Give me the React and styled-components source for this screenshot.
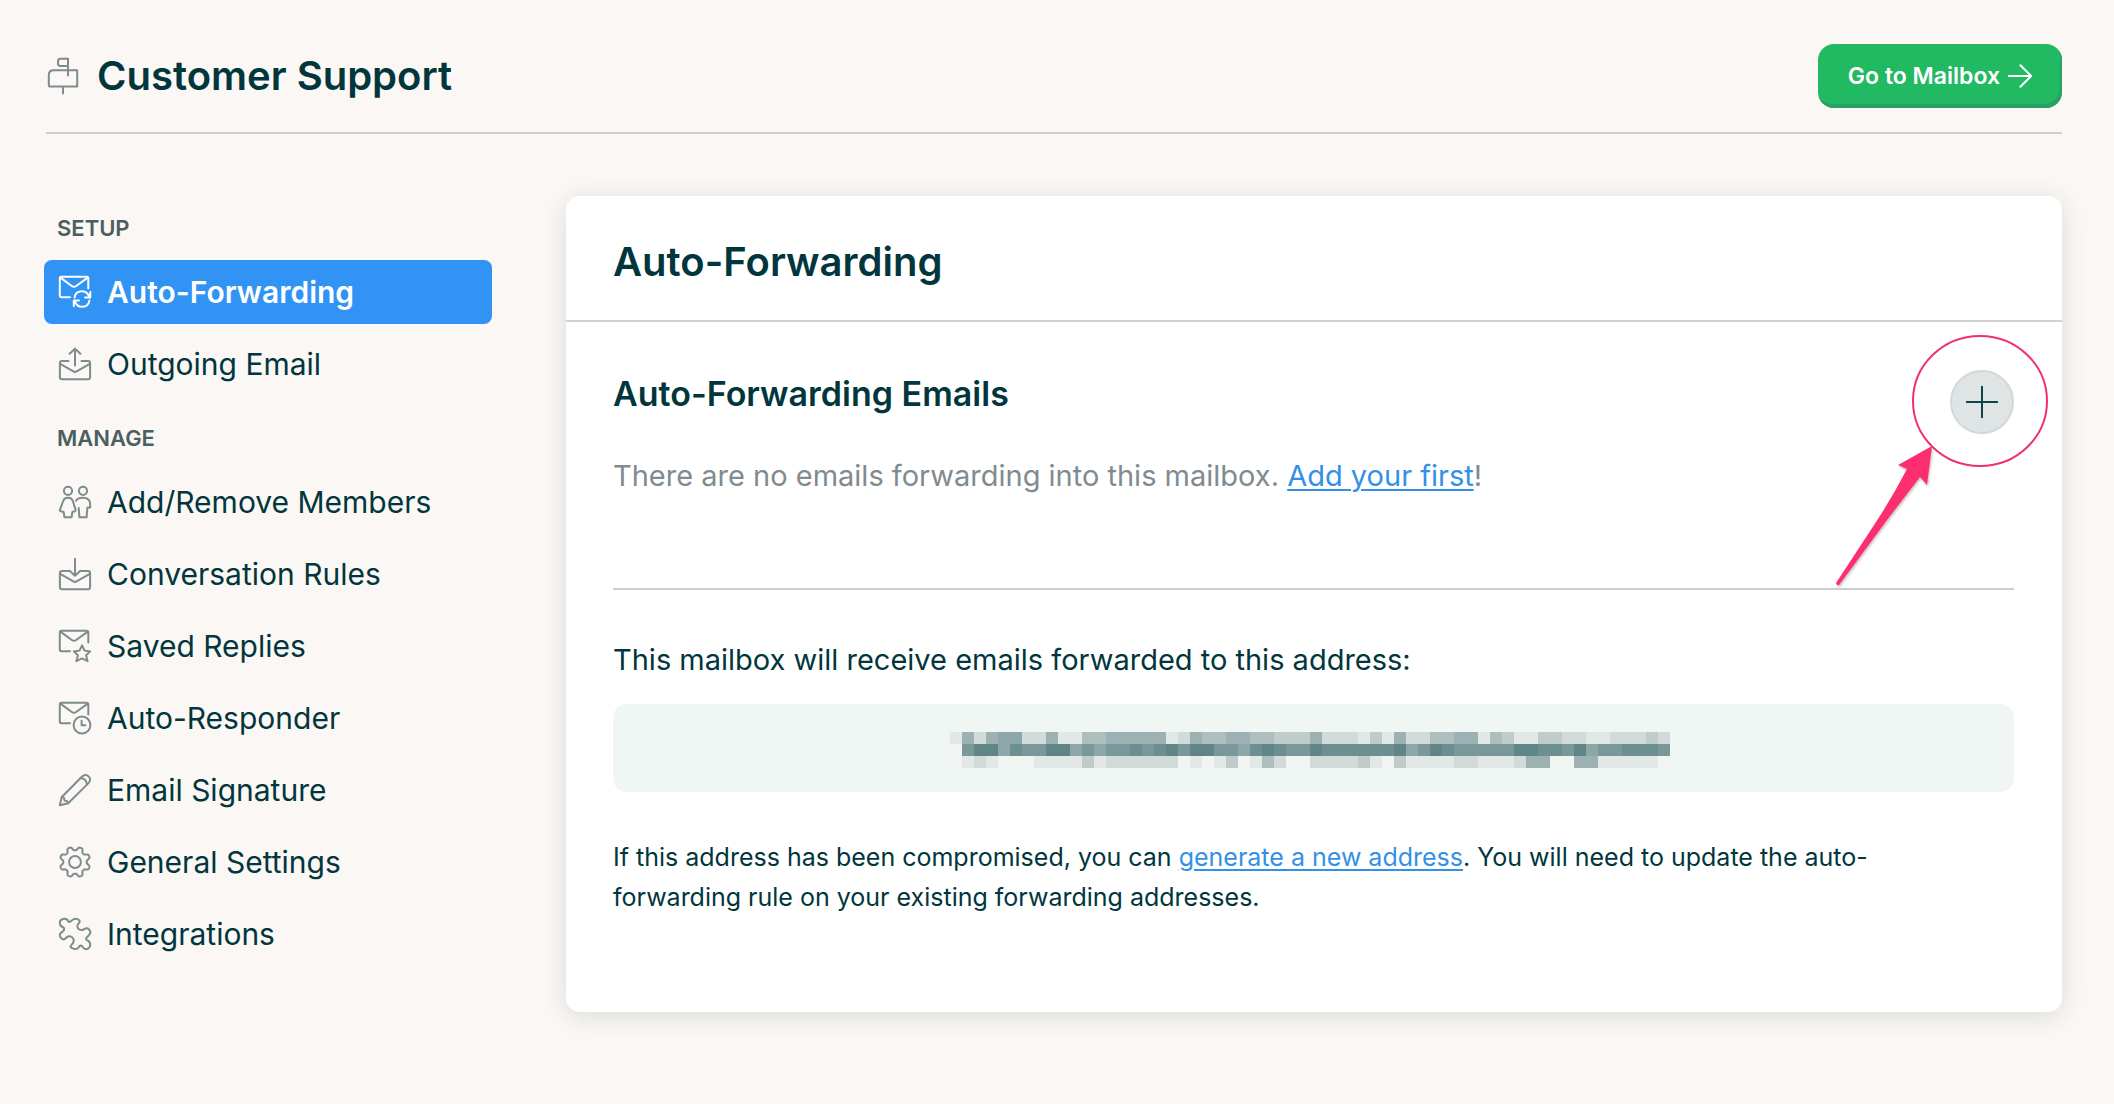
import React from 'react';
import styled, { createGlobalStyle, css } from 'styled-components';
const GlobalStyle = createGlobalStyle`
  * {
    padding: 0;
    margin: 0;
    box-sizing: border-box;
  }

  body {
    background: #faf7f4;
    color: #02363d;
    font-family: Inter, Roboto, "Liberation Sans", sans-serif;
    font-size: 29px;
  }
`
const Page = styled.div`
  padding: 44px 52px 44px 44px;
`;

const Header = styled.header`
  display: flex;
  align-items: center;
  gap: 19px;
  margin-left: 2px;
  padding: 0 0 24px 2px;
  border-bottom: 2px solid #cdd2cf;
  > svg {
    color: #7e8c8d;
  }
`;

const Title = styled.h1`
  flex: 1;
  font-size: 40px;
  line-height: 64px;
  font-weight: 600;
`

const MailboxButton = styled.button`
  display: flex;
  align-items: center;
  gap: 8px;
  height: 64px;
  padding: 0 30px;
  border: 0;
  border-radius: 16px;
  background: #22b963;
  box-shadow: inset -2px -4px 0 #2a9f68;
  color: #fff;
  font-family: inherit;
  font-size: 23px;
  font-weight: 600;
  cursor: pointer;
`

const Layout = styled.div`
  display: grid;
  grid-template-columns: 448px minmax(0, 1fr);
  gap: 74px;
  align-items: start;
  margin-top: 62px;
`

const Nav = styled.nav`
  display: flex;
  flex-direction: column;
  gap: 10px;
`

const NavTitle = styled.h2`
  padding-left: 13px;
  color: #4b5e60;
  font-size: 22px;
  line-height: 64px;
  font-weight: 600;
`

const NavList = styled.ul`
  display: grid;
  gap: 8px;
  list-style: none;
`

const NavLink = styled.a`
  display: flex;
  align-items: center;
  gap: 16px;
  height: 64px;
  padding: 0 15px;
  border-radius: 8px;
  color: #02363d;
  font-size: 30px;
  line-height: 36px;
  text-decoration: none;
  svg {
    color: #7e8c8d;
  }
  ${p => p.$active && css`
    background: #3193f3;
    color: #fff;
    font-weight: 600;
    svg {
      color: #fff;
    }
  `}
`

const Card = styled.main`
  border-radius: 14px;
  background: #fff;
  box-shadow: 0 4px 24px rgba(40, 60, 60, 0.14);
`

const CardHeader = styled.div`
  padding: 38px 47px 30px;
  border-bottom: 2px solid #cdd2d2;
`

const CardTitle = styled.h2`
  font-size: 40px;
  line-height: 56px;
  font-weight: 600;
`

const CardBody = styled.div`
  padding: 48px 48px 95px 47px;
`

const Forwards = styled.section`
  padding-bottom: 90px;
  border-bottom: 2px solid #c9cfd1;
`

const SectionHead = styled.div`
  display: flex;
  justify-content: space-between;
  align-items: flex-start;
`

const SectionTitle = styled.h3`
  font-size: 34px;
  line-height: 48px;
  font-weight: 600;
`

const Empty = styled.p`
  margin-top: 20px;
  color: #7f8b90;
  line-height: 44px;
`

const Link = styled.a`
  color: #3490e6;
  text-decoration: underline;
  text-decoration-thickness: 2px;
  text-underline-offset: 3px;
`

const AddWrap = styled.div`
  position: relative;
`

const AddButton = styled.button`
  display: flex;
  align-items: center;
  justify-content: center;
  width: 64px;
  height: 64px;
  border: 2px solid #d3d8d8;
  border-radius: 50%;
  background: #dfe4e5;
  color: #12434a;
  cursor: pointer;
`

const Callout = styled.svg`
  position: absolute;
  top: -40px;
  left: -120px;
  pointer-events: none;
  path {
    filter: drop-shadow(1px 2px 1px rgba(60, 0, 20, 0.25));
  }
`

const Address = styled.section`
  padding-top: 48px;
`

const AddressLabel = styled.p`
  line-height: 44px;
`

const AddressBox = styled.div`
  display: flex;
  justify-content: center;
  margin-top: 22px;
  padding: 28px 32px 24px 24px;
  border-radius: 14px;
  background: #f0f6f4;
`

const Note = styled.p`
  margin-top: 45px;
  padding-right: 48px;
  font-size: 25px;
  line-height: 40px;
`

const Icon = ({ children, width = 32, height = 32 }) => (
  <svg
    width={width}
    height={height}
    viewBox={`0 0 ${width} ${height}`}
    fill="none"
    stroke="currentColor"
    strokeWidth="2"
    strokeLinecap="round"
    strokeLinejoin="round"
    overflow="visible"
    aria-hidden="true"
  >
    {children}
  </svg>
)

// envelope with its bottom right corner left open for a badge
const Envelope = () => (
  <>
    <path d="M11 21.3H2.5Q.8 21.3 .8 19.6V2.5Q.8 .8 2.5 .8H27.6Q29.3 .8 29.3 2.5V12.5" />
    <path d="M1.4 1.6 12.8 10Q15 11.6 17.2 10L28.8 1.6" />
  </>
)

const OpenEnvelope = () => (
  <>
    <path d="M9.5 13H3Q.9 13 .9 15V29.2Q.9 31.2 3 31.2H29Q31.1 31.2 31.1 29.2V15Q31.1 13 29 13H22.5" />
    <path d="M1.2 15.8 14.4 23.4Q16 24.4 17.6 23.4L30.8 15.8" />
  </>
)

const gear = Array.from({ length: 161 }, (_, i) => {
  const a = (i / 160) * Math.PI * 2
  const r = 13.5 + 1.9 * Math.tanh(-1.8 * Math.cos(8 * a))
  return `${i ? 'L' : 'M'}${(16 + r * Math.sin(a)).toFixed(2)} ${(16 - r * Math.cos(a)).toFixed(2)}`
}).join('') + 'Z'

const icons = {
  forward: (
    <>
      <Envelope />
      <path d="M15.6 21.6C16.5 13.6 27.5 12.8 30.2 20.6M31.3 16V21.4H26" />
      <path d="M30.4 24.6C29 32.4 18.4 33 15.8 25.4M14.8 30V24.6H20" />
    </>
  ),
  outgoing: (
    <>
      <OpenEnvelope />
      <path d="M16 17.5V.8M10.6 5.8 16 .8 21.4 5.8" />
    </>
  ),
  members: (
    <>
      <circle cx="9" cy="4.8" r="4.1" />
      <circle cx="24" cy="4.8" r="4.1" />
      <path d="M9 11.8C5.8 11.8 4.6 13.4 4 15.5L1 23.6Q.7 24.8 1.8 25.2L4.6 26 5.4 31.2H12.6L13.4 26 15.8 25.2Q16.8 24.8 16.5 23.6L14 15.5C13.4 13.4 12.2 11.8 9 11.8Z" />
      <path d="M17 14.6C18.4 12.6 20.6 11.8 24 11.8 29 11.8 31.2 14.4 31.2 18.4V21.6H28.4L27.6 31.2H20.4L19.7 22" />
    </>
  ),
  rules: (
    <>
      <OpenEnvelope />
      <path d="M16 .8V17.8M10.6 12.8 16 17.8 21.4 12.8" />
    </>
  ),
  saved: (
    <>
      <Envelope />
      <path d="M23 15.4 25.5 20.6 31.2 21.4 27.1 25.3 28.6 31.2 23 28.4 17.4 31.2 18.9 25.3 14.8 21.4 20.5 20.6Z" />
    </>
  ),
  responder: (
    <>
      <Envelope />
      <circle cx="23" cy="23" r="8.4" />
      <path d="M22.6 18.8V23.3H26.4" />
    </>
  ),
  signature: (
    <>
      <path d="M2.8 23 22.6 3C25 .3 27.6 .3 29.6 2.4 31.7 4.4 31.7 7 29.2 9.4L9.2 29.2 .8 31.2Z" />
      <path d="M2.8 23 5 24 5.6 26.6 8.2 27.2 9.2 29.2M21.6 4C25 4.4 27.6 7 28 10.4" />
    </>
  ),
  settings: (
    <>
      <path d={gear} />
      <circle cx="16" cy="16" r="5.9" />
    </>
  ),
  integrations: (
    <path d="M4.5 9.5C0 8.5-.5 2 4 1 7 .2 8.5 1.5 9.5 3.5 10.5 5 12 3 14 1.5 16 .3 18 .3 20.5 2.5 21.5 4 19.5 5.5 18.5 7 17.5 9.5 20 12.5 23 12 25.5 11.3 26.5 9.5 29 10.5 31.5 12.5 32 14.5 30.5 16.5 29 18.5 26.5 19.5 27 21 27.5 22.5 31.3 22.5 31.3 26.5 31.3 30.5 27.5 32 25 30.5 23 29 23.5 27 21.5 27.5 20 28 19 31 17 31 14 31.3 11.5 29.5 11.5 28.5 11.5 27 15 25.5 14.8 22.5 14.5 19.5 11.5 17.5 9 18.5 7 19.5 6.5 21.5 4.5 21.5 2.5 21.3 .5 18.5 .8 16.5 1.2 14.5 4 14 5 12 5.5 10.5 5.5 10 4.5 9.5Z" />
  )
}

const menu = [
  {
    title: 'SETUP',
    items: [
      { icon: 'forward', label: 'Auto-Forwarding', active: true },
      { icon: 'outgoing', label: 'Outgoing Email' }
    ]
  },
  {
    title: 'MANAGE',
    items: [
      { icon: 'members', label: 'Add/Remove Members' },
      { icon: 'rules', label: 'Conversation Rules' },
      { icon: 'saved', label: 'Saved Replies' },
      { icon: 'responder', label: 'Auto-Responder' },
      { icon: 'signature', label: 'Email Signature' },
      { icon: 'settings', label: 'General Settings' },
      { icon: 'integrations', label: 'Integrations' }
    ]
  }
]

// the address is hidden behind blocks, one digit of darkness for each
const blocks = [
  '152566225114455555125445544333522213152244551431133221122232',
  '079968779967677878979977689877988888896798777779988796778887',
  '012100011113122222201013014200222231031111221112550055111110'
]
const shades = ['#f0f5f2', '#e1e8e6', '#d2dbd9', '#c0cccb', '#aebebe', '#9eb1b2', '#8da6a8', '#7a989a', '#6c8f91', '#5f8587']

const HiddenAddress = () => (
  <svg width="720" height="36" role="img" aria-label="Hidden address" shapeRendering="crispEdges">
    {blocks.map((row, y) => row.split('').map((d, x) => (
      <rect key={`${x}-${y}`} x={x * 12} y={y * 12} width="12" height="12" fill={shades[d]} />
    )))}
  </svg>
)

const App = () => {
  return (
    <>
      <GlobalStyle />
      <Page>
        <Header>
          <Icon width={30} height={36}>
            <path d="M5.5 12.2H29.2V28.6H2.5Q.8 28.6 .8 27V17Q.8 12.2 5.5 12.2ZM15 28.6V35.4" />
            <path d="M20 17.4V.8H12.5Q10 .8 10 3.2V5.6Q10 8 12.5 8H20" />
          </Icon>
          <Title>Customer Support</Title>
          <MailboxButton type="button">
            Go to Mailbox
            <Icon width={24} height={24}>
              <path d="M.8 12H23.2M12.4 1.2 23.2 12 12.4 22.8" />
            </Icon>
          </MailboxButton>
        </Header>
        <Layout>
          <Nav>
            {menu.map(group => (
              <div key={group.title}>
                <NavTitle>{group.title}</NavTitle>
                <NavList>
                  {group.items.map(item => (
                    <li key={item.label}>
                      <NavLink href="#" $active={item.active}>
                        <Icon>{icons[item.icon]}</Icon>
                        {item.label}
                      </NavLink>
                    </li>
                  ))}
                </NavList>
              </div>
            ))}
          </Nav>
          <Card>
            <CardHeader>
              <CardTitle>Auto-Forwarding</CardTitle>
            </CardHeader>
            <CardBody>
              <Forwards>
                <SectionHead>
                  <SectionTitle>Auto-Forwarding Emails</SectionTitle>
                  <AddWrap>
                    <AddButton type="button" aria-label="Add email">
                      <Icon>
                        <path d="M16 .8V31.2M.8 16H31.2" />
                      </Icon>
                    </AddButton>
                    <Callout width="224" height="264" viewBox="0 0 224 264" aria-hidden="true">
                      <ellipse cx="150" cy="71" rx="67" ry="65" fill="none" stroke="#f0316f" strokeWidth="2" />
                      <path fill="#fc2e70" d="M102 116 68 135 77 139Q64 164 48 189L6 253Q7 256 9 255L60 186Q74 168 90 147L97 155Z" />
                    </Callout>
                  </AddWrap>
                </SectionHead>
                <Empty>
                  There are no emails forwarding into this mailbox. <Link href="#">Add your first</Link>!
                </Empty>
              </Forwards>
              <Address>
                <AddressLabel>This mailbox will receive emails forwarded to this address:</AddressLabel>
                <AddressBox>
                  <HiddenAddress />
                </AddressBox>
                <Note>
                  If this address has been compromised, you can <Link href="#">generate a new address</Link>. You will need to update the auto-forwarding rule on your existing forwarding addresses.
                </Note>
              </Address>
            </CardBody>
          </Card>
        </Layout>
      </Page>
    </>
  )
}

export default App
